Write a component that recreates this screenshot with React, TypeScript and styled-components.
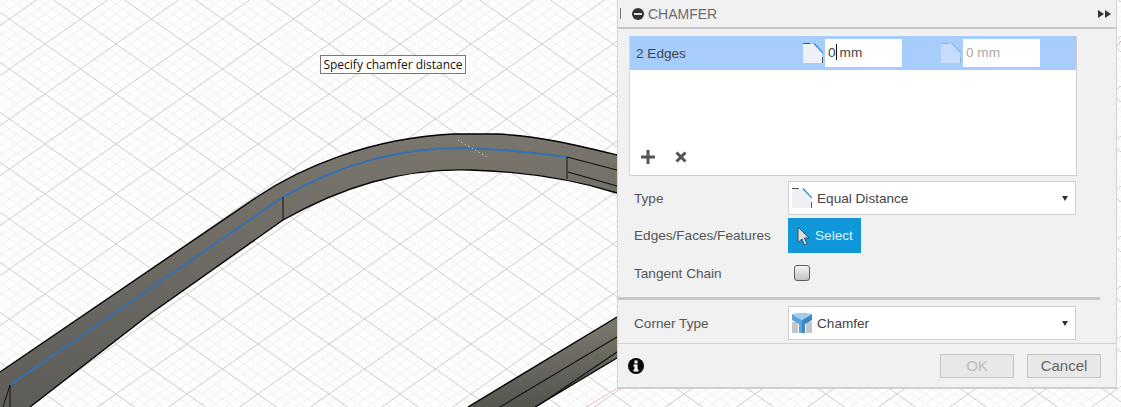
import React from "react";
import styled, { createGlobalStyle } from "styled-components";

const GlobalStyle = createGlobalStyle`
  html, body {
    margin: 0;
    padding: 0;
    background: #fff;
    font-family: "Liberation Sans", Arial, sans-serif;
  }
`;

const Viewport = styled.div`
  position: relative;
  width: 1121px;
  height: 407px;
  overflow: hidden;
  background: #fff;
`;

const Scene = styled.svg`
  position: absolute;
  top: 0;
  left: 0;
  display: block;
`;

const Hint = styled.div`
  position: absolute;
  left: 320px;
  top: 55px;
  width: 146px;
  height: 19px;
  box-sizing: border-box;
  border: 1px solid #777;
  background: #fff;
  color: #111;
  font-family: "Open Sans", sans-serif;
  font-size: 12px;
  line-height: 17px;
  text-align: center;
  white-space: nowrap;
`;

const Panel = styled.div`
  position: absolute;
  left: 617px;
  top: 0;
  width: 500px;
  height: 389px;
  box-sizing: border-box;
  background: #f1f1f1;
  border-left: 1px solid #d4d4d4;
  border-right: 1px solid #d4d4d4;
  border-bottom: 2px solid #cfcfcf;
  color: #555;
  font-size: 13.6px;
`;

const TitleBar = styled.div`
  height: 27px;
  display: flex;
  align-items: center;
  padding: 0 5px 0 2px;
  border-bottom: 2px solid #c9c9c9;
  color: #6b6b6b;
  font-size: 14px;
`;

const Grip = styled.span`
  width: 2px;
  height: 11px;
  border-left: 1px solid #777;
  margin-right: 9px;
`;

const TitleText = styled.span`
  margin-left: 4px;
  flex: 1;
`;

const EdgeTable = styled.div`
  width: 448px;
  height: 140px;
  box-sizing: border-box;
  margin: 7px 0 0 11px;
  background: #fff;
  border: 1px solid #cfcfcf;
  border-top: none;
  border-left-color: #d8d8d8;
  display: flex;
  flex-direction: column;
`;

const EdgeRow = styled.div`
  height: 34px;
  background: #a6cdfb;
  display: flex;
  align-items: center;
  gap: 39px;
  padding-left: 6px;
  color: #444;
`;

const EdgeName = styled.span`
  width: 128px;
`;

const DistanceCell = styled.div`
  display: flex;
  align-items: center;
  gap: 2px;
`;

const DistanceInput = styled.div<{ $muted?: boolean }>`
  width: 77px;
  height: 28px;
  box-sizing: border-box;
  padding-left: 3px;
  background: #fff;
  line-height: 28px;
  color: ${(p) => (p.$muted ? "#a8a8a8" : "#444")};
  white-space: nowrap;
`;

const Caret = styled.span`
  display: inline-block;
  width: 1px;
  height: 16px;
  margin: 0 3px 0 0;
  background: #111;
  vertical-align: -3px;
`;

const TableTools = styled.div`
  margin-top: auto;
  height: 36px;
  display: flex;
  align-items: center;
  gap: 20px;
  padding-left: 11px;
`;

const Rows = styled.div`
  display: flex;
  flex-direction: column;
`;

const FormRow = styled.div<{ $height: number; $top?: number }>`
  display: grid;
  grid-template-columns: 170px 288px;
  align-items: center;
  height: ${(p) => p.$height}px;
  margin-top: ${(p) => p.$top ?? 0}px;
`;

const Label = styled.span`
  padding-left: 16px;
  white-space: nowrap;
`;

const Dropdown = styled.div`
  height: 34px;
  box-sizing: border-box;
  display: flex;
  align-items: center;
  gap: 5px;
  padding: 0 7px 0 3px;
  background: #fff;
  border: 1px solid #cfcfcf;
  color: #444;
`;

const DropdownText = styled.span`
  flex: 1;
`;

const Arrow = styled.span`
  width: 0;
  height: 0;
  border-left: 3.5px solid transparent;
  border-right: 3.5px solid transparent;
  border-top: 5px solid #333;
`;

const SelectButton = styled.div`
  width: 73px;
  height: 35px;
  box-sizing: border-box;
  display: flex;
  align-items: center;
  gap: 5px;
  padding-left: 9px;
  background: #0f97da;
  color: #dff3fd;
`;

const CheckBox = styled.div`
  width: 16px;
  height: 16px;
  box-sizing: border-box;
  margin-left: 6px;
  border: 1px solid #5f5f5f;
  border-radius: 3px;
  background: linear-gradient(#f3f3f3, #c4c4c4);
`;

const Divider = styled.div`
  width: 482px;
  height: 3px;
  margin: 4px 0 6px;
  background: #c8c8c8;
`;

const Footer = styled.div`
  height: 45px;
  margin-top: 3px;
  box-sizing: border-box;
  display: flex;
  align-items: center;
  gap: 13px;
  padding: 0 15px 0 10px;
  border-top: 1px solid #d2d2d2;
`;

const FooterInfo = styled.div`
  flex: 1;
  display: flex;
`;

const DialogButton = styled.div<{ $disabled?: boolean }>`
  width: 74px;
  height: 24px;
  box-sizing: border-box;
  border: 1px solid #c6c6c6;
  background: #e8e8e8;
  text-align: center;
  font-size: 15px;
  line-height: 22px;
  color: ${(p) => (p.$disabled ? "#bdbdbd" : "#666")};
`;

// grid repeats every 71x50 px, five small cells per big one
const TILE_W = 71;
const TILE_H = 50;
const minorOffsets = [1, 2, 3, 4].map((k) => (k * TILE_W) / 5);

const bandTop = "M0 372L257 197C300 168 370 138 453 134L497 134C540 136 580 146 617 155";
const bandBottom = "L617 193C585 183 540 172 470 170C400 168 340 188 283 220L150 314L30 407L0 407Z";
const bandBottomEdge = "M617 193C585 183 540 172 470 170C400 168 340 188 283 220L150 314L30 407";

const GridPattern = () => (
  <pattern
    id="floor"
    width={TILE_W}
    height={TILE_H}
    patternUnits="userSpaceOnUse"
    patternTransform="translate(45 44)"
  >
    <rect width={TILE_W} height={TILE_H} fill="#fefefe" />
    {minorOffsets.map((dx) => (
      <g key={dx} stroke="#ececec" strokeWidth="0.8">
        <line x1={dx} y1={0} x2={dx + TILE_W} y2={TILE_H} />
        <line x1={dx - TILE_W} y1={0} x2={dx} y2={TILE_H} />
        <line x1={dx} y1={TILE_H} x2={dx + TILE_W} y2={0} />
        <line x1={dx - TILE_W} y1={TILE_H} x2={dx} y2={0} />
      </g>
    ))}
    <g stroke="#cdcdcd" strokeWidth="1">
      <line x1={0} y1={0} x2={TILE_W} y2={TILE_H} />
      <line x1={0} y1={TILE_H} x2={TILE_W} y2={0} />
    </g>
  </pattern>
);

const Canvas = () => (
  <Scene width="1121" height="407" viewBox="0 0 1121 407">
    <defs>
      <GridPattern />
      <linearGradient id="band" x1="0.45" y1="0" x2="0.55" y2="1">
        <stop offset="0" stopColor="#7b776e" />
        <stop offset="1" stopColor="#5c5b57" />
      </linearGradient>
      <linearGradient id="lowerBand" x1="0.45" y1="0.2" x2="0.6" y2="0.9">
        <stop offset="0" stopColor="#7a766c" />
        <stop offset="1" stopColor="#56564f" />
      </linearGradient>
    </defs>
    <rect width="1121" height="407" fill="url(#floor)" />
    <line x1="586" y1="407" x2="618" y2="388" stroke="#e8bcbc" />
    <line x1="1117" y1="46" x2="1121" y2="41" stroke="#e8a0a0" />

    <path d={`${bandTop}${bandBottom}`} fill="url(#band)" />
    <path d={bandTop} fill="none" stroke="#000" strokeWidth="1.4" />
    <path d={bandBottomEdge} fill="none" stroke="#000" strokeWidth="1.4" />
    <path
      d="M10 385L283 197C330 170 390 148 460 148C500 149 540 153 567 157"
      fill="none"
      stroke="#3470b4"
      strokeWidth="2"
    />
    <path d="M10 385V407M3 407L10 385M283 197V220M567 157V179" stroke="#111" strokeWidth="1" fill="none" />
    <path d="M567 157L617 170M568 172L617 186" stroke="#111" strokeWidth="1.2" fill="none" />
    <line x1="458" y1="140" x2="487" y2="157" stroke="#e8e8e8" strokeWidth="1" strokeDasharray="1 3" />

    <polygon points="468,407 617,317 617,358 535,407" fill="url(#lowerBand)" />
    <polyline points="468,407 617,317" fill="none" stroke="#000" strokeWidth="1.4" />
    <polyline points="535,407 617,358" fill="none" stroke="#000" strokeWidth="1.4" />
    <path d="M500 407L617 337M536 407L617 352" stroke="#111" strokeWidth="1.1" fill="none" />
  </Scene>
);

const ChamferIcon = ({ faded }: { faded?: boolean }) => (
  <svg width="20" height="20" viewBox="0 0 20 20" style={{ flex: "none" }}>
    <path d="M0 1H12L19 9V20H0Z" fill={faded ? "#c6dcf8" : "#edf0f4"} />
    <path d="M0 0.5H7" stroke={faded ? "#8fb2d8" : "#555"} />
    <path d="M11 0.5L20 10" stroke={faded ? "#8db8e6" : "#2f86cc"} strokeWidth="1.2" fill="none" />
    <path d="M19.5 14V20" stroke={faded ? "#8fb2d8" : "#555"} />
  </svg>
);

const CornerIcon = () => (
  <svg width="20" height="20" viewBox="0 0 20 20" style={{ flex: "none" }}>
    <rect y="9" width="6" height="11" fill="#c3c7ca" />
    <rect x="14" y="9" width="6" height="11" fill="#c3c7ca" />
    <path d="M0 1L10 7L20 1V7L13 11V20H7V11L0 7Z" fill="#5ea3d8" />
    <path d="M10 7L20 1V7L13 11V20H10Z" fill="#3f87c4" />
    <path d="M0 1L6 0H14L20 1L10 7Z" fill="#9fcdf0" />
  </svg>
);

const MinusDot = () => (
  <svg width="12" height="12" viewBox="0 0 12 12" style={{ flex: "none" }}>
    <circle cx="6" cy="6" r="6" fill="#333" />
    <rect x="2" y="5" width="8" height="2" fill="#ddd" />
  </svg>
);

const Forward = () => (
  <svg width="13" height="8" viewBox="0 0 13 8">
    <path d="M0 0L6 4L0 8ZM7 0L13 4L7 8Z" fill="#333" />
  </svg>
);

const Plus = () => (
  <svg width="14" height="14" viewBox="0 0 14 14">
    <path d="M5.5 0H8.500V5.500H14V8.500H8.500V14H5.500V8.500H0V5.500H5.500Z" fill="#555" />
  </svg>
);

const Cross = () => (
  <svg width="12" height="12" viewBox="0 0 12 12">
    <path d="M1.500 1.500L10.500 10.500M10.500 1.500L1.500 10.500" stroke="#555" strokeWidth="3" />
  </svg>
);

const Pointer = () => (
  <svg width="13" height="20" viewBox="0 0 13 20" style={{ flex: "none" }}>
    <path
      d="M1 1L12 12H7.500L10 18L7.500 19L5 13L1 16.500Z"
      fill="#dcdcdc"
      stroke="#34566a"
      strokeWidth="1"
    />
  </svg>
);

const InfoDot = () => (
  <svg width="16" height="16" viewBox="0 0 16 16">
    <circle cx="8" cy="8" r="8" fill="#0a0a0a" />
    <rect x="6.500" y="2.500" width="3" height="3" fill="#fff" />
    <path d="M5.500 6.500H9.500V11.500H10.500V13.500H5.500V11.500H6.500V8.500H5.500Z" fill="#fff" />
  </svg>
);

const App = () => {
  return (
    <Viewport>
      <GlobalStyle />
      <Canvas />
      <Hint>Specify chamfer distance</Hint>
      <Panel>
        <TitleBar>
          <Grip />
          <MinusDot />
          <TitleText>CHAMFER</TitleText>
          <Forward />
        </TitleBar>
        <EdgeTable>
          <EdgeRow>
            <EdgeName>2 Edges</EdgeName>
            <DistanceCell>
              <ChamferIcon />
              <DistanceInput>
                0
                <Caret />
                mm
              </DistanceInput>
            </DistanceCell>
            <DistanceCell>
              <ChamferIcon faded />
              <DistanceInput $muted>0 mm</DistanceInput>
            </DistanceCell>
          </EdgeRow>
          <TableTools>
            <Plus />
            <Cross />
          </TableTools>
        </EdgeTable>
        <Rows>
          <FormRow $height={34} $top={5}>
            <Label>Type</Label>
            <Dropdown>
              <ChamferIcon />
              <DropdownText>Equal Distance</DropdownText>
              <Arrow />
            </Dropdown>
          </FormRow>
          <FormRow $height={35} $top={3}>
            <Label>Edges/Faces/Features</Label>
            <SelectButton>
              <Pointer />
              Select
            </SelectButton>
          </FormRow>
          <FormRow $height={40}>
            <Label>Tangent Chain</Label>
            <CheckBox />
          </FormRow>
          <Divider />
          <FormRow $height={34}>
            <Label>Corner Type</Label>
            <Dropdown>
              <CornerIcon />
              <DropdownText>Chamfer</DropdownText>
              <Arrow />
            </Dropdown>
          </FormRow>
        </Rows>
        <Footer>
          <FooterInfo>
            <InfoDot />
          </FooterInfo>
          <DialogButton $disabled>OK</DialogButton>
          <DialogButton>Cancel</DialogButton>
        </Footer>
      </Panel>
    </Viewport>
  );
};

export default App;
